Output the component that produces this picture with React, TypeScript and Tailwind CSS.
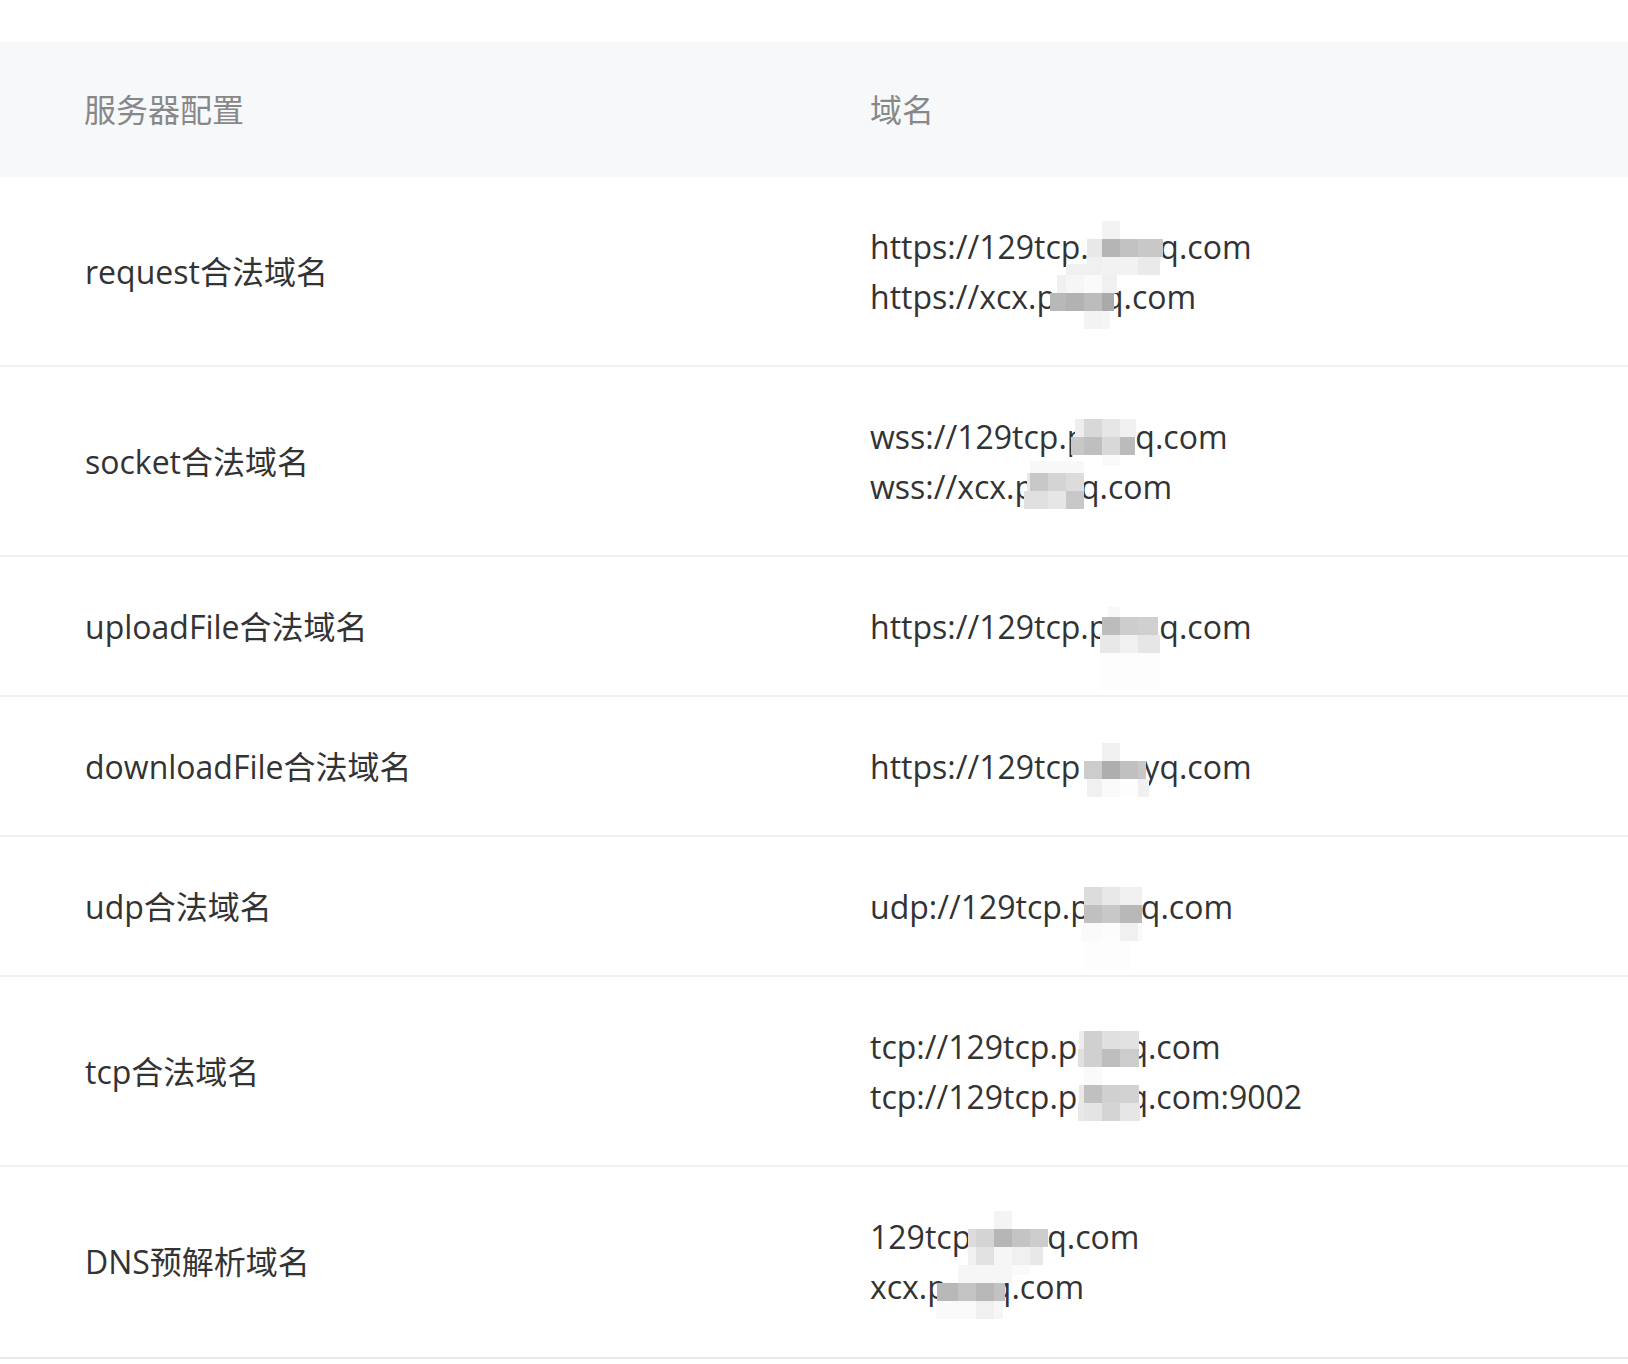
const font = { fontFamily: '"Open Sans", "Noto Sans CJK SC", sans-serif' };

// gap is the width of the part of the domain hidden by the mosaic
type Line = { before: string; gap: string; after: string };

const rows: { name: string; lines: Line[] }[] = [
  { name: 'request合法域名', lines: [
    { before: 'https://129tcp.p', gap: 'w-[51px]', after: 'q.com' },
    { before: 'https://xcx.p', gap: 'w-[48px]', after: 'q.com' },
  ] },
  { name: 'socket合法域名', lines: [
    { before: 'wss://129tcp.p', gap: 'w-[49px]', after: 'q.com' },
    { before: 'wss://xcx.p', gap: 'w-[46px]', after: 'q.com' },
  ] },
  { name: 'uploadFile合法域名', lines: [{ before: 'https://129tcp.p', gap: 'w-[51px]', after: 'q.com' }] },
  { name: 'downloadFile合法域名', lines: [{ before: 'https://129tcp', gap: 'w-[63px]', after: 'yq.com' }] },
  { name: 'udp合法域名', lines: [{ before: 'udp://129tcp.p', gap: 'w-[51px]', after: 'q.com' }] },
  { name: 'tcp合法域名', lines: [
    { before: 'tcp://129tcp.p', gap: 'w-[51px]', after: 'q.com' },
    { before: 'tcp://129tcp.p', gap: 'w-[51px]', after: 'q.com:9002' },
  ] },
  { name: 'DNS预解析域名', lines: [
    { before: '129tcp.p', gap: 'w-[48px]', after: 'q.com' },
    { before: 'xcx.p', gap: 'w-[45px]', after: 'q.com' },
  ] },
];

// mosaic cells over the domain names: x, y, w, h, colour
const mosaic: [number, number, number, number, string][] = [
  // request
  [1102, 221, 18, 18, '#f3f3f3'], [1087, 239, 15, 18, '#e8e8e8'], [1102, 239, 18, 18, '#b5b5b5'], [1120, 239, 18, 18, '#c2c2c2'], [1138, 239, 25, 18, '#c8c8c8'],
  [1087, 257, 15, 18, '#f0f0f0'], [1102, 257, 36, 18, '#f2f2f2'], [1138, 257, 22, 18, '#eaeaea'],
  [1066, 264, 36, 11, '#f0f0f0'],
  [1057, 275, 9, 18, '#f0f0f0'], [1066, 275, 18, 18, '#f6f6f6'], [1084, 275, 18, 18, '#fafafa'], [1102, 275, 15, 18, '#f0f0f0'],
  [1050, 293, 16, 18, '#b8b8b8'], [1066, 293, 18, 18, '#b2b2b2'], [1084, 293, 18, 18, '#bcbcbc'], [1102, 293, 12, 18, '#aaaaaa'],
  [1084, 311, 18, 18, '#f3f3f3'], [1102, 311, 8, 18, '#f5f5f5'],
  // socket
  [1075, 419, 9, 18, '#eeeeee'], [1084, 419, 18, 18, '#d8d8d8'], [1102, 419, 18, 18, '#e6e6e6'], [1120, 419, 16, 18, '#f0f0f0'],
  [1071, 437, 13, 18, '#c8c8c8'], [1084, 437, 18, 18, '#bfbfbf'], [1102, 437, 18, 18, '#d8d8d8'], [1120, 437, 15, 18, '#bbbbbb'],
  [1102, 455, 18, 11, '#fafafa'],
  [1030, 461, 54, 12, '#f8f8f8'],
  [1027, 473, 3, 18, '#e8e8e8'], [1030, 473, 18, 18, '#c8c8c8'], [1048, 473, 18, 18, '#d4d4d4'], [1066, 473, 18, 18, '#dcdcdc'],
  [1024, 491, 6, 18, '#e0e0e0'], [1030, 491, 18, 18, '#e0e0e0'], [1048, 491, 18, 18, '#e6e6e6'], [1066, 491, 18, 18, '#c8c8c8'],
  // uploadFile
  [1108, 607, 12, 10, '#f8f8f8'],
  [1102, 617, 18, 18, '#bcbcbc'], [1120, 617, 18, 18, '#cdcdcd'], [1138, 617, 20, 18, '#d0d0d0'],
  [1100, 635, 20, 18, '#e8e8e8'], [1120, 635, 18, 18, '#f0f0f0'], [1138, 635, 22, 18, '#e6e6e6'],
  [1100, 653, 60, 37, '#fdfdfd'],
  // downloadFile
  [1102, 743, 18, 18, '#f0f0f0'],
  [1084, 761, 18, 18, '#cccccc'], [1102, 761, 18, 18, '#aeaeae'], [1120, 761, 18, 18, '#c0c0c0'], [1138, 761, 8, 18, '#c8c8c8'],
  [1087, 779, 15, 18, '#f0f0f0'], [1102, 779, 18, 18, '#fafafa'], [1120, 779, 18, 18, '#fdfdfd'], [1138, 779, 11, 18, '#f0f0f0'],
  // udp
  [1084, 887, 18, 18, '#dcdcdc'], [1102, 887, 18, 18, '#e8e8e8'], [1120, 887, 22, 18, '#f0f0f0'],
  [1084, 905, 18, 18, '#c0c0c0'], [1102, 905, 18, 18, '#c8c8c8'], [1120, 905, 22, 18, '#b8b8b8'],
  [1081, 923, 21, 18, '#fafafa'], [1102, 923, 18, 18, '#fcfcfc'], [1120, 923, 18, 18, '#f0f0f0'], [1138, 923, 4, 18, '#fafafa'],
  [1084, 941, 46, 29, '#fdfdfd'],
  // tcp
  [1079, 1031, 5, 18, '#eeeeee'], [1084, 1031, 18, 18, '#d0d0d0'], [1102, 1031, 18, 18, '#e0e0e0'], [1120, 1031, 19, 18, '#e2e2e2'],
  [1078, 1049, 6, 18, '#e0e0e0'], [1084, 1049, 18, 18, '#d0d0d0'], [1102, 1049, 18, 18, '#bebebe'], [1120, 1049, 19, 18, '#cccccc'],
  [1084, 1067, 18, 18, '#fafafa'],
  [1079, 1085, 5, 18, '#e8e8e8'], [1084, 1085, 18, 18, '#c0c0c0'], [1102, 1085, 18, 18, '#d0d0d0'], [1120, 1085, 19, 18, '#d2d2d2'],
  [1078, 1103, 6, 18, '#e8e8e8'], [1084, 1103, 18, 18, '#e4e4e4'], [1102, 1103, 18, 18, '#d4d4d4'], [1120, 1103, 20, 18, '#e6e6e6'],
  // DNS
  [994, 1211, 18, 18, '#f4f4f4'],
  [968, 1229, 8, 18, '#dcdcdc'], [976, 1229, 18, 18, '#d4d4d4'], [994, 1229, 18, 18, '#b6b6b6'], [1012, 1229, 18, 18, '#c4c4c4'], [1030, 1229, 18, 18, '#cccccc'],
  [968, 1247, 8, 18, '#f0f0f0'], [976, 1247, 18, 18, '#e2e2e2'], [994, 1247, 18, 18, '#f6f6f6'], [1012, 1247, 18, 18, '#f0f0f0'], [1030, 1247, 13, 18, '#e8e8e8'],
  [958, 1265, 54, 18, '#f6f6f6'], [1012, 1265, 18, 10, '#fafafa'],
  [937, 1283, 21, 18, '#b8b8b8'], [958, 1283, 18, 18, '#c4c4c4'], [976, 1283, 18, 18, '#b8b8b8'], [994, 1283, 11, 18, '#c2c2c2'],
  [936, 1301, 40, 18, '#fafafa'], [976, 1301, 18, 18, '#f0f0f0'], [994, 1301, 9, 18, '#f6f6f6'],
];

export default function App() {
  return (
    <div className="relative h-[1364px] w-[1628px] overflow-hidden bg-white pt-[42px] text-[32px] leading-[50px] text-[#333333]" style={font}>
      <div className="grid h-[135px] grid-cols-[870px_1fr] items-center bg-[#f7f8fa] text-[#888888]">
        <div className="pl-[84px]">服务器配置</div>
        <div>域名</div>
      </div>
      <div>
        {rows.map((row) => (
          <div key={row.name} className="grid grid-cols-[870px_1fr] items-center border-b-2 border-[#f0f0f0] pt-[45px] pb-[43px] last:border-[#e8e8ee] last:pb-[45px]">
            <div className="pl-[85px]">{row.name}</div>
            <div>
              {row.lines.map((line, i) => (
                <div key={i} className="whitespace-nowrap">
                  {line.before}
                  <span className={`inline-block ${line.gap}`} />
                  {line.after}
                </div>
              ))}
            </div>
          </div>
        ))}
      </div>
      <svg className="absolute left-0 top-0" width="1628" height="1364">
        {mosaic.map(([x, y, w, h, fill], i) => (
          <rect key={i} x={x} y={y} width={w} height={h} fill={fill} />
        ))}
      </svg>
    </div>
  );
}
